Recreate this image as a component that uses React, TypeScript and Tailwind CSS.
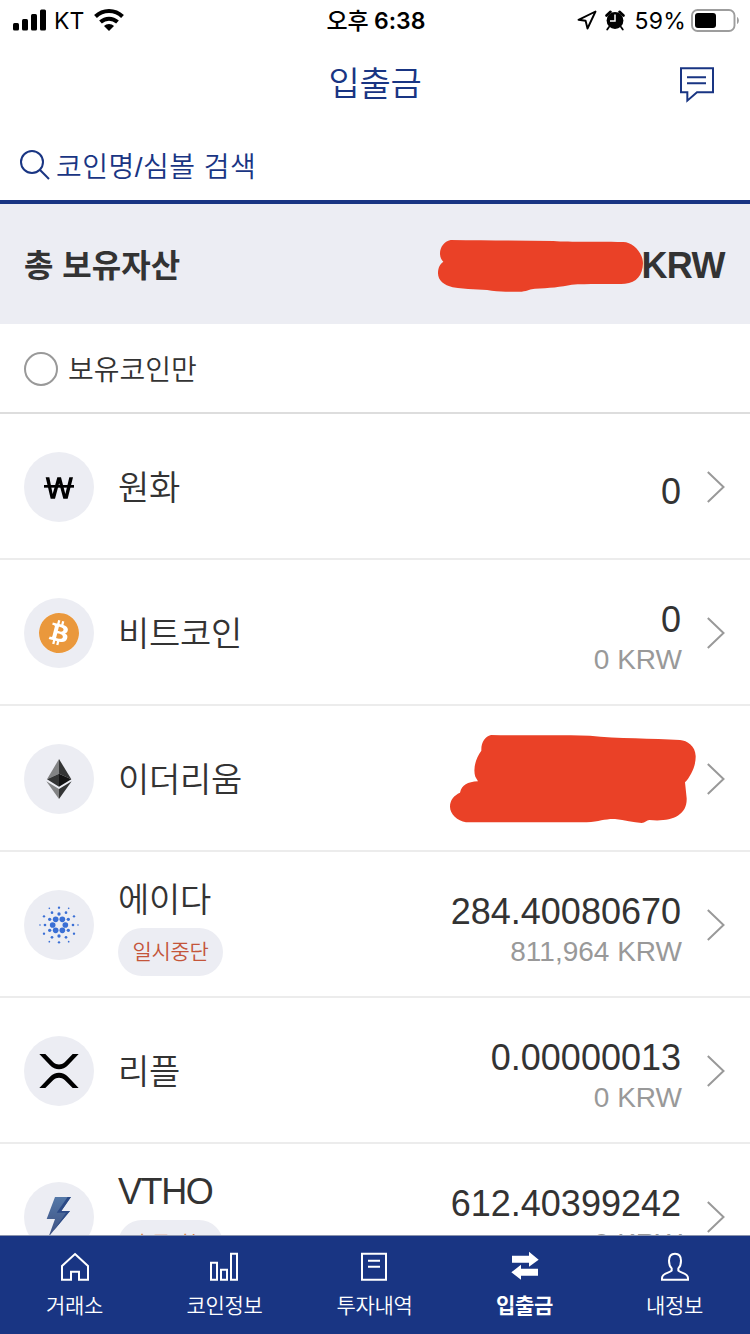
import type { ReactNode } from 'react';
import clsx from 'clsx';
import { SiBitcoin } from 'react-icons/si';

type Coin = {
  name: string;
  icon: ReactNode;
  amount?: string;
  krw?: string;
  badge?: string;
  badgeColor?: string;
  hidden?: boolean;
};

const ADA_DOTS: [number, number, number][] = [
  [158, 165, 8.5], [196, 165, 8.5], [167, 148, 8.5], [187, 148, 8.5], [167, 181, 8.5], [187, 181, 8.5],
  [177, 132, 5], [177, 198, 5], [149, 148, 5], [205, 148, 5], [149, 181, 5], [205, 181, 5],
  [135, 165, 4], [219, 165, 4], [156, 128, 4], [198, 128, 4], [156, 202, 4], [198, 202, 4],
  [132, 139, 3.5], [222, 139, 3.5], [132, 191, 3.5], [222, 191, 3.5], [177, 113, 3.5], [177, 217, 3.5],
  [120, 165, 2.5], [234, 165, 2.5], [148, 115, 2.5], [206, 115, 2.5], [148, 215, 2.5], [206, 215, 2.5],
];

function WonIcon() {
  return (
    <svg className="mt-[2px]" width="30" height="22" viewBox="132 771 90 66">
      <path d="M137 772H148L158 822L172 772H183L196 822L208 772H219L203 836H190L177.5 790L165 836H152Z" />
      <path d="M132 795H222V803H132Z" />
    </svg>
  );
}

function BitcoinIcon() {
  return (
    <div className="rounded-full bg-white">
      <SiBitcoin size={40} color="#ea983c" />
    </div>
  );
}

function EthIcon() {
  return (
    <svg width="26" height="40" viewBox="138 507 78 120">
      <path d="M177 507L141 568L177 551Z" fill="#828384" />
      <path d="M177 507L214 568L177 551Z" fill="#343535" />
      <path d="M141 568L177 551V590Z" fill="#343535" />
      <path d="M214 568L177 551V590Z" fill="#131313" />
      <path d="M139 574L177 597V627Z" fill="#828384" />
      <path d="M215 574L177 597V627Z" fill="#343535" />
    </svg>
  );
}

function AdaIcon() {
  return (
    <svg width="40" height="40" viewBox="117 105 120 120" fill="#3a6fd5">
      {ADA_DOTS.map(([x, y, r]) => (
        <circle key={`${x}-${y}`} cx={x} cy={y} r={r} />
      ))}
    </svg>
  );
}

function XrpIcon() {
  return (
    <svg width="40" height="36" viewBox="117 549 120 108">
      <path d="M118 552H136L160 577C170 586 184 586 194 577L218 552H236L204 586C189 602 165 602 150 586Z" />
      <path d="M118 654H136L160 630C170 621 184 621 194 630L218 654H236L204 620C189 604 165 604 150 620Z" />
    </svg>
  );
}

function VthoIcon() {
  return (
    <svg width="26" height="40" viewBox="138 141 78 120">
      <defs>
        <linearGradient id="bolt" x1="0" y1="0" x2="0" y2="1">
          <stop offset="0" stopColor="#5478a8" />
          <stop offset="1" stopColor="#3c4f80" />
        </linearGradient>
      </defs>
      <path d="M165 141H213L184 183H210L146 260L165 207H140Z" fill="url(#bolt)" />
      <path d="M203 141H213L184 183H210L160 243L198 188H170Z" fill="#2c4a86" />
    </svg>
  );
}

const coins: Coin[] = [
  { name: '원화', icon: <WonIcon />, amount: '0' },
  { name: '비트코인', icon: <BitcoinIcon />, amount: '0', krw: '0 KRW' },
  { name: '이더리움', icon: <EthIcon />, hidden: true },
  {
    name: '에이다',
    icon: <AdaIcon />,
    amount: '284.40080670',
    krw: '811,964 KRW',
    badge: '일시중단',
    badgeColor: 'text-[#c4553a]',
  },
  { name: '리플', icon: <XrpIcon />, amount: '0.00000013', krw: '0 KRW' },
  {
    name: 'VTHO',
    icon: <VthoIcon />,
    amount: '612.40399242',
    krw: '0 KRW',
    badge: '출금가능',
    badgeColor: 'text-[#d98140]',
  },
];

const tabs = [
  {
    label: '거래소',
    icon: (
      <svg width="30" height="30" viewBox="180 307 90 90" fill="none" stroke="#fff" strokeWidth="6">
        <path d="M225 313L264 349V390H237V366H213V390H186V349Z" />
      </svg>
    ),
  },
  {
    label: '코인정보',
    icon: (
      <svg width="30" height="30" viewBox="630 307 90 90" fill="none" stroke="#fff" strokeWidth="6">
        <path d="M633 339H651V390H633ZM663 360H681V390H663ZM693 312H711V390H693Z" />
      </svg>
    ),
  },
  {
    label: '투자내역',
    icon: (
      <svg width="30" height="30" viewBox="1080 307 90 90" fill="none" stroke="#fff" strokeWidth="6">
        <path d="M1086 312H1158V390H1086ZM1104 333H1140M1104 351H1140" />
      </svg>
    ),
  },
  {
    label: '입출금',
    active: true,
    icon: (
      <svg width="30" height="30" viewBox="405 307 90 90" fill="#fff" className="overflow-visible">
        <path d="M411 318H462V306L491 330L462 351V339H411Z" />
        <path d="M489 378H438V390L409 368L438 345V357H489Z" />
      </svg>
    ),
  },
  {
    label: '내정보',
    icon: (
      <svg width="30" height="30" viewBox="855 307 90 90" fill="none" stroke="#fff" strokeWidth="6">
        <path d="M900 312C888 312 882 321 882 333C882 345 886 352 890 356V363C884 370 861 370 861 385V390H939V385C939 370 916 370 910 363V356C914 352 918 345 918 333C918 321 912 312 900 312Z" />
      </svg>
    ),
  },
];

function StatusBar() {
  return (
    <div className="flex h-10 items-center pr-[11px] pl-[13px] font-['Inter','Noto_Sans_CJK_KR',sans-serif] text-[23px] font-normal text-black">
      <div className="flex flex-1 items-center">
        <svg width="33" height="22" viewBox="0 0 33 22">
          <rect x="0" y="14" width="6" height="7.5" rx="1.5" />
          <rect x="9" y="10" width="6" height="11.5" rx="1.5" />
          <rect x="18" y="5" width="6" height="16.5" rx="1.5" />
          <rect x="27" y="0.5" width="6" height="21" rx="1.5" />
        </svg>
        <span className="mt-[2px] ml-2">KT</span>
        <svg className="ml-[10px]" width="30" height="22" viewBox="0 0 30 22" fill="none" stroke="#000" strokeWidth="4">
          <path d="M1.5 7.5C9 0.2 21 0.2 28.5 7.5" />
          <path d="M6.5 13C11.5 8.5 18.5 8.5 23.5 13" />
          <path d="M10 17C12.5 14.3 17.5 14.3 20 17L15 22Z" fill="#000" stroke="none" />
        </svg>
      </div>
      <span className="mt-[2px] font-semibold">
        <span className="font-medium tracking-[-0.3px]">오후</span> <span>6:38</span>
      </span>
      <div className="flex flex-1 items-center justify-end">
        <svg width="20" height="20" viewBox="0 0 20 20" fill="none" stroke="#000" strokeWidth="1.9" strokeLinejoin="round">
          <path d="M18.5 1.5L1.5 9.8L8.6 10.7L10.5 18.5Z" />
        </svg>
        <svg className="ml-[8px]" width="20" height="21" viewBox="0 0 20 21">
          <circle cx="10" cy="10.5" r="8.4" />
          <path d="M1.5 5.5L5.5 1.8M18.5 5.5L14.5 1.8" stroke="#000" strokeWidth="2.6" strokeLinecap="round" />
          <path d="M4 17L2.2 19.5M16 17L17.8 19.5" stroke="#000" strokeWidth="1.8" strokeLinecap="round" />
          <path d="M10 4.5V11H5" stroke="#fff" strokeWidth="1.5" fill="none" />
        </svg>
        <span className="mt-[2px] ml-[10px] tracking-[0.2px]">59%</span>
        <svg className="ml-[5px]" width="48" height="23" viewBox="0 0 48 23">
          <rect x="1" y="1" width="42.5" height="21" rx="5.5" fill="none" stroke="#9d9d9d" strokeWidth="1.9" />
          <rect x="4" y="4" width="21" height="15" rx="3" />
          <path d="M46 8C48.5 9 48.5 14 46 15Z" fill="#9d9d9d" />
        </svg>
      </div>
    </div>
  );
}

function CoinRow({ coin }: { coin: Coin }) {
  return (
    <li className="flex h-[146px] shrink-0 items-center border-b-2 border-[#ececec] pr-[25px] pl-6">
      <div className="mt-[2px] flex size-[70px] items-center justify-center rounded-full bg-[#ecedf3]">{coin.icon}</div>
      <div className={clsx('ml-6 flex flex-col items-start', coin.badge ? 'mt-[5px]' : 'mt-[3px]')}>
        <span
          className={clsx(
            'leading-[46px]',
            coin.name === 'VTHO' ? 'text-[36px] tracking-[-1.4px]' : 'text-[34px] tracking-[-0.3px]',
          )}
        >
          {coin.name}
        </span>
        {coin.badge && (
          <span
            className={clsx(
              'mt-[5px] flex h-12 w-[105px] items-center justify-center rounded-full bg-[#ecedf3] text-[21px] tracking-[-0.3px]',
              coin.badgeColor,
            )}
          >
            {coin.badge}
          </span>
        )}
      </div>
      {coin.hidden ? (
        <svg className="mt-px mr-[11px] ml-auto" width="246" height="89" viewBox="60 42 738 267" fill="#ea4127">
          <path d="M183 45C165 50 153 66 154 92C138 112 128 146 136 170L144 184C112 186 96 194 90 218C72 226 60 240 60 260C60 282 82 302 108 307H470C510 304 525 296 555 297C585 301 610 307 635 309C645 308 650 301 658 300C720 306 772 290 770 235L765 187C780 172 798 140 797 108C796 78 772 62 750 60C670 54 560 56 480 47C380 44 280 47 183 45Z" />
        </svg>
      ) : (
        <div className={clsx('mr-[25px] ml-auto flex flex-col items-end', coin.krw ? 'mt-[15px]' : 'mt-[11px]')}>
          <span className="mr-px text-[36px] leading-10">{coin.amount}</span>
          {coin.krw && <span className="text-[28px] leading-[40px] text-[#999]">{coin.krw}</span>}
        </div>
      )}
      <svg className="mt-[2px]" width="18" height="32" viewBox="0 0 18 32" fill="none" stroke="#999" strokeWidth="2">
        <path d="M0.8 1L16.5 16L0.8 31" />
      </svg>
    </li>
  );
}

export default function App() {
  return (
    <div className="flex h-[1334px] w-[750px] flex-col overflow-hidden bg-white font-['Liberation_Sans','Noto_Sans_CJK_KR',sans-serif] font-[350] text-[#333]">
      <StatusBar />

      <header className="grid h-[88px] grid-cols-[1fr_auto_1fr] items-center px-9 text-[#193583]">
        <h1 className="col-start-2 text-[34px] leading-[46px] tracking-[-0.3px]">입출금</h1>
        <svg className="mt-[2px] justify-self-end" width="34" height="36" viewBox="360 203 102 108" fill="none" stroke="#193583" strokeWidth="6">
          <path d="M363 207H459V279H411L382 304V279H363ZM381 234H438M381 252H438" />
        </svg>
      </header>

      <div className="flex h-[76px] items-center border-b-4 border-[#193583] pl-5 text-[#193583]">
        <svg className="mt-[2px]" width="30" height="30" viewBox="0 0 30 30" fill="none" stroke="#193583" strokeWidth="2">
          <circle cx="12" cy="12" r="11" />
          <path d="M19.8 19.8L29 29" />
        </svg>
        <span className="mt-2 ml-[6px] text-[28px] tracking-[0.5px]">코인명/심볼 검색</span>
      </div>

      <div className="flex h-[120px] items-center justify-between bg-[#ecedf3] pr-[25px] pl-6 font-bold">
        <span className="mt-1 text-[32px]">총 보유자산</span>
        <div className="flex items-center">
          <svg className="relative z-10 mt-[2px] -mr-[3px]" width="206" height="53" viewBox="54 57 618 159" fill="#ea4127">
            <path d="M92 60C72 64 60 82 60 100C60 112 64 120 70 125C60 132 54 142 54 160C54 182 72 196 98 202C140 209 180 207 215 212C250 216 280 216 305 215C325 212 330 207 345 206C385 205 425 200 455 194C500 190 570 193 615 191C650 189 668 165 669 130C669 100 640 66 610 66C540 64 450 67 400 63C300 61 200 62 92 60Z" />
          </svg>
          <span className="mt-1 text-[36px] tracking-[-0.6px]">KRW</span>
        </div>
      </div>

      <label className="flex h-[90px] items-center border-b-2 border-[#ddd] pl-6">
        <span className="mt-[2px] size-[34px] rounded-full border-2 border-[#999]" />
        <span className="mt-[6px] ml-[10px] text-[28px]">보유코인만</span>
      </label>

      <ul className="flex min-h-0 flex-1 flex-col overflow-hidden">
        {coins.map((coin) => (
          <CoinRow key={coin.name} coin={coin} />
        ))}
      </ul>

      <nav className="grid h-[99px] shrink-0 grid-cols-5 border-t border-[#8a93ad] bg-[#193583] text-white">
        {tabs.map((tab) => (
          <div key={tab.label} className="flex flex-col items-center pt-4">
            {tab.icon}
            <span
              className={clsx(
                'mt-[10px] -ml-px text-[21px] leading-7 tracking-[-0.3px]',
                tab.active && 'font-bold',
              )}
            >
              {tab.label}
            </span>
          </div>
        ))}
      </nav>
    </div>
  );
}
